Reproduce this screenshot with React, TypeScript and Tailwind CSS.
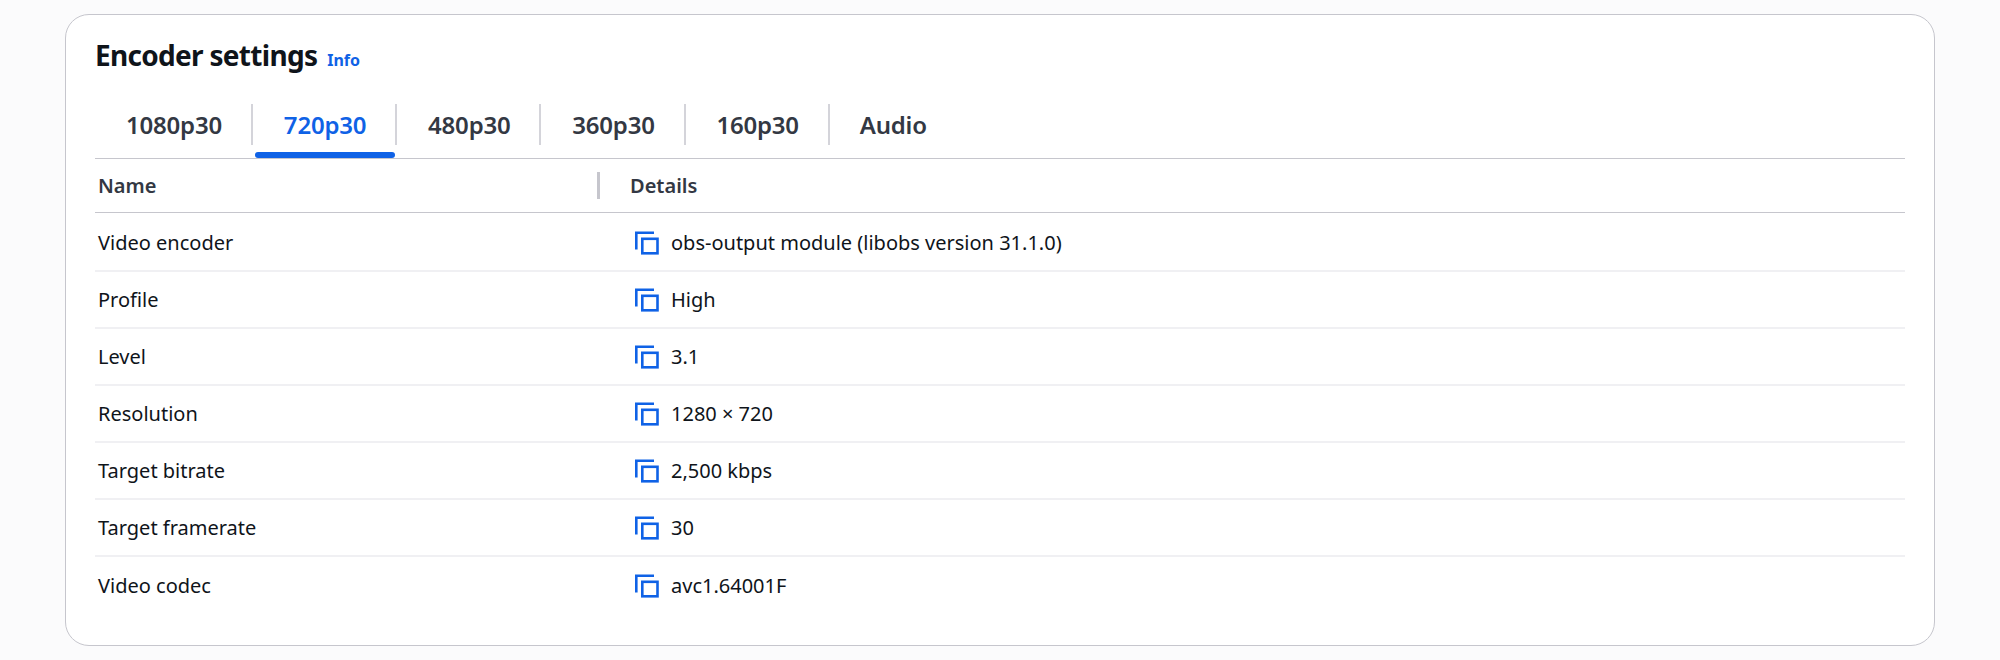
import React from 'react';

const tabs = ['1080p30', '720p30', '480p30', '360p30', '160p30', 'Audio'];

const rows = [
  { name: 'Video encoder', value: 'obs-output module (libobs version 31.1.0)' },
  { name: 'Profile', value: 'High' },
  { name: 'Level', value: '3.1' },
  { name: 'Resolution', value: '1280 × 720' },
  { name: 'Target bitrate', value: '2,500 kbps' },
  { name: 'Target framerate', value: '30' },
  { name: 'Video codec', value: 'avc1.64001F' },
];

function CopyIcon() {
  return (
    <svg width="24" height="24" viewBox="0 0 24 24" fill="none" stroke="#0f62e6" strokeWidth="2.6" className="shrink-0">
      <path d="M1.3 18.5V1.8H19" />
      <rect x="7.3" y="7.8" width="15.2" height="14.5" />
    </svg>
  );
}

export default function App() {
  return (
    <div className="h-[660px] bg-[#fbfbfc] pt-[14px] pl-[65px] pr-[65px] font-['Noto_Sans','Open_Sans',sans-serif]">
      <div className="h-[632px] rounded-[24px] border border-[#c6c6cd] bg-white px-[29px] pt-[19px]">
        <div className="flex items-baseline h-[42px]">
          <h2 className="text-[28px] leading-[42px] font-bold text-[#0f141a] tracking-[-0.7px]">Encoder settings</h2>
          <a className="ml-[10px] text-[16px] font-bold text-[#0f62e6]">Info</a>
        </div>

        <div className="mt-[28px] flex h-[55px] border-b border-[#c6c6cd]">
          {tabs.map((tab, i) => (
            <div key={tab} className={`relative flex items-center ${i === 0 ? 'w-[158px]' : 'w-[144.2px]'} ${tab === 'Audio' ? 'justify-start pl-[30px]' : 'justify-center'}`}>
              <span className={`text-[24px] font-semibold tracking-[-0.2px] pb-[12px] ${tab === '720p30' ? 'text-[#0f62e6]' : 'text-[#333843]'}`}>{tab}</span>
              {i < tabs.length - 1 && <span className="absolute right-0 top-0 h-[41px] w-[2px] bg-[#d4d4da]" />}
              {tab === '720p30' && <span className="absolute left-[2px] right-[2px] bottom-0 h-[6px] rounded-[3px] bg-[#0f62e6]" />}
            </div>
          ))}
        </div>

        <div className="flex items-center h-[54px] border-b border-[#c6c6cd] text-[20px] font-semibold text-[#333843]">
          <div className="relative flex items-center h-[27px] w-[505px] pl-[3px]">
            Name
            <span className="absolute right-0 top-0 h-[27px] w-[3px] bg-[#c6c6cd]" />
          </div>
          <div className="pl-[30px]">Details</div>
        </div>

        <div className="pt-[2px]">
          {rows.map((row, i) => (
            <div key={row.name} className={`flex items-center h-[57px] text-[20px] text-[#0f141a] ${i < rows.length - 1 ? 'border-b-2 border-[#f0f0f3]' : ''}`}>
              <div className="w-[505px] pl-[3px]">{row.name}</div>
              <div className="flex items-center pl-[35px]">
                <CopyIcon />
                <span className="ml-[12px]">{row.value}</span>
              </div>
            </div>
          ))}
        </div>
      </div>
    </div>
  );
}
